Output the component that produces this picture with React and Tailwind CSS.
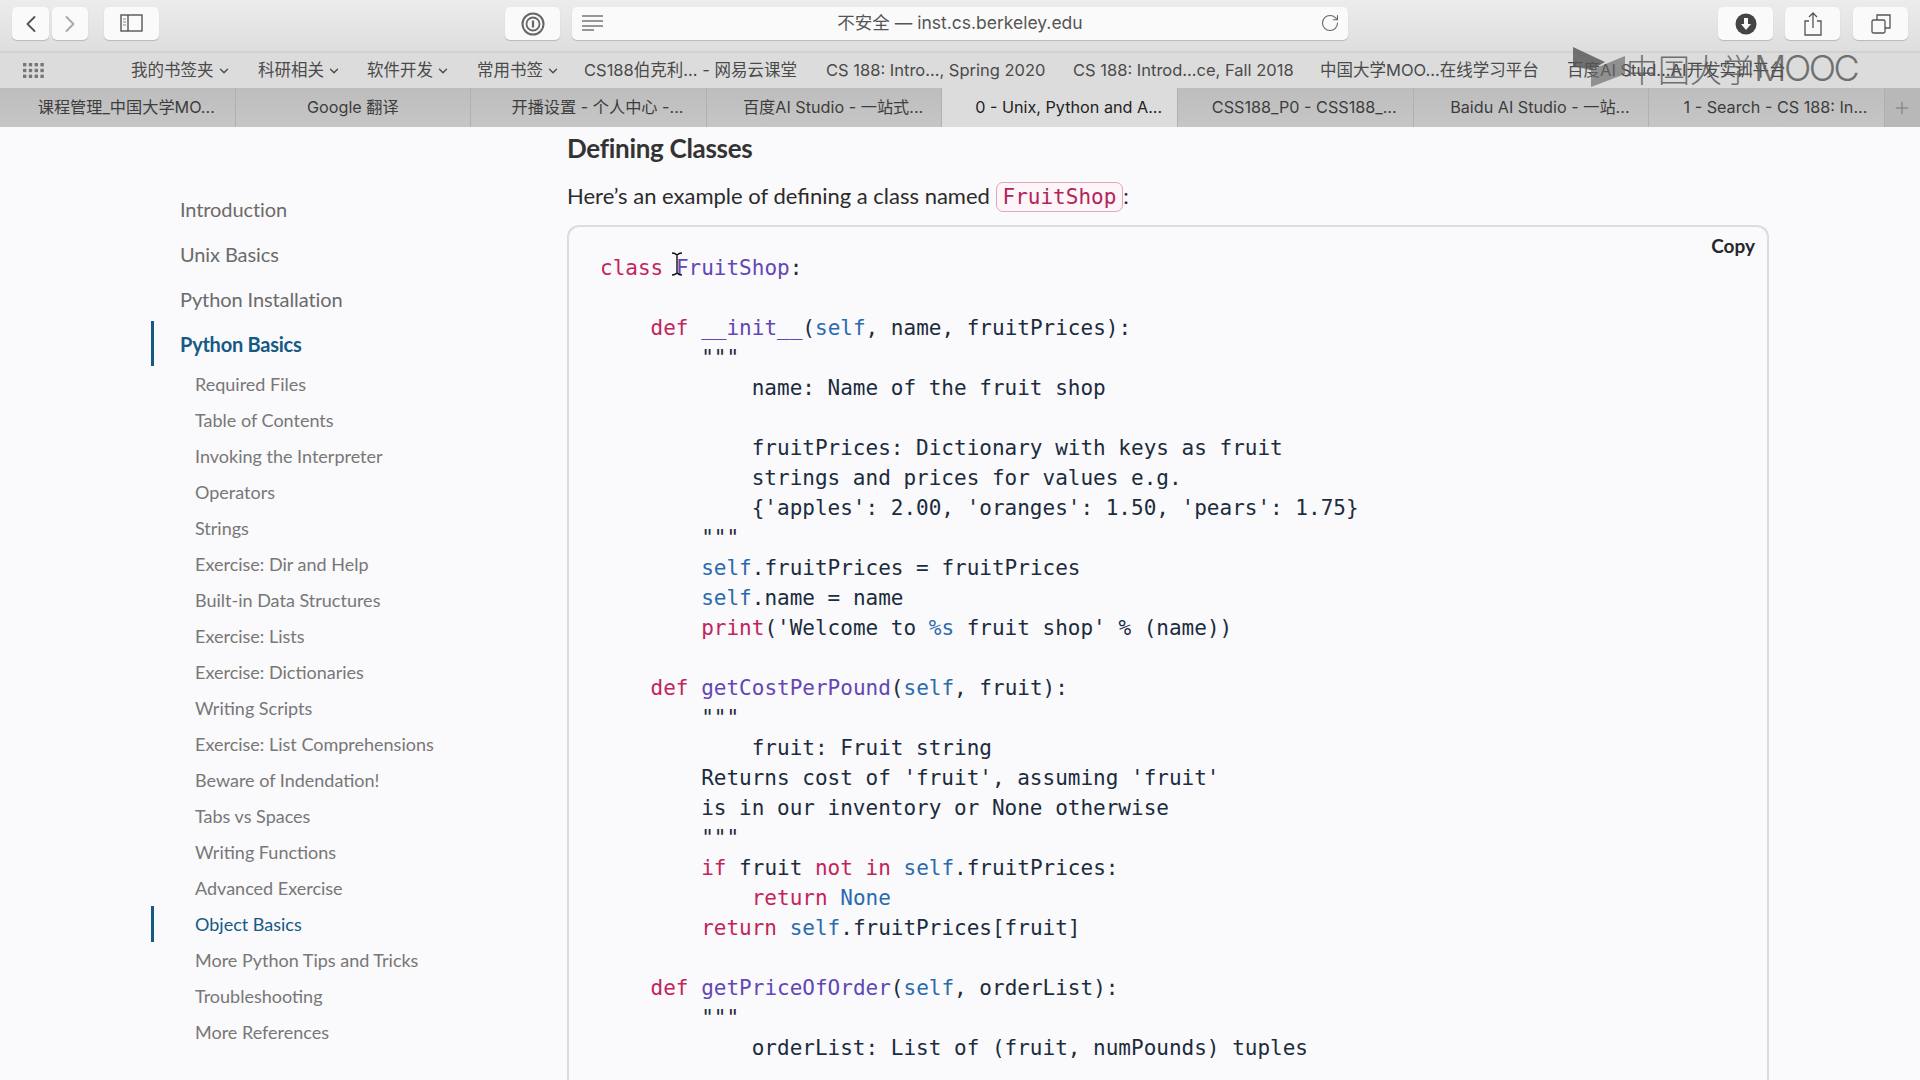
import { ChevronDown, ChevronLeft, ChevronRight, Plus, RotateCw } from "lucide-react";

const CJK = "font-['Inter','Noto_Sans_CJK_SC',sans-serif]";

const BOOKMARKS = [
  { label: "我的书签夹", menu: true, w: "w-[127px]" },
  { label: "科研相关", menu: true, w: "w-[109px]" },
  { label: "软件开发", menu: true, w: "w-[110px]" },
  { label: "常用书签", menu: true, w: "w-[107px]" },
  { label: "CS188伯克利... - 网易云课堂", w: "w-[242px]" },
  { label: "CS 188: Intro..., Spring 2020", w: "w-[247px]" },
  { label: "CS 188: Introd...ce, Fall 2018", w: "w-[247px]" },
  { label: "中国大学MOO...在线学习平台", w: "w-[247px]" },
  { label: "百度AI Stud...AI开发实训平台", w: "w-[230px]" },
];

const TABS = [
  "课程管理_中国大学MO...",
  "Google 翻译",
  "开播设置 - 个人中心 -...",
  "百度AI Studio - 一站式...",
  "0 - Unix, Python and A...",
  "CSS188_P0 - CSS188_...",
  "Baidu AI Studio - 一站...",
  "1 - Search - CS 188: In...",
];

const TOP_NAV = ["Introduction", "Unix Basics", "Python Installation"];

const SUB_NAV = [
  "Required Files",
  "Table of Contents",
  "Invoking the Interpreter",
  "Operators",
  "Strings",
  "Exercise: Dir and Help",
  "Built-in Data Structures",
  "Exercise: Lists",
  "Exercise: Dictionaries",
  "Writing Scripts",
  "Exercise: List Comprehensions",
  "Beware of Indendation!",
  "Tabs vs Spaces",
  "Writing Functions",
  "Advanced Exercise",
  "Object Basics",
  "More Python Tips and Tricks",
  "Troubleshooting",
  "More References",
];

const K = "text-[#c2255c]";
const T = "text-[#6247b5]";
const S = "text-[#2a6aae]";

const CODE = [
  [[K, "class"], ["", " "], [T, "FruitShop"], ["", ":"]],
  [],
  [["", "    "], [K, "def"], ["", " "], [T, "__init__"], ["", "("], [S, "self"], ["", ", name, fruitPrices):"]],
  [["", '        """']],
  [["", "            name: Name of the fruit shop"]],
  [],
  [["", "            fruitPrices: Dictionary with keys as fruit"]],
  [["", "            strings and prices for values e.g."]],
  [["", "            {'apples': 2.00, 'oranges': 1.50, 'pears': 1.75}"]],
  [["", '        """']],
  [["", "        "], [S, "self"], ["", ".fruitPrices = fruitPrices"]],
  [["", "        "], [S, "self"], ["", ".name = name"]],
  [["", "        "], [K, "print"], ["", "('Welcome to "], [S, "%s"], ["", " fruit shop' % (name))"]],
  [],
  [["", "    "], [K, "def"], ["", " "], [T, "getCostPerPound"], ["", "("], [S, "self"], ["", ", fruit):"]],
  [["", '        """']],
  [["", "            fruit: Fruit string"]],
  [["", "        Returns cost of 'fruit', assuming 'fruit'"]],
  [["", "        is in our inventory or None otherwise"]],
  [["", '        """']],
  [["", "        "], [K, "if"], ["", " fruit "], [K, "not in"], ["", " "], [S, "self"], ["", ".fruitPrices:"]],
  [["", "            "], [K, "return"], ["", " "], [S, "None"]],
  [["", "        "], [K, "return"], ["", " "], [S, "self"], ["", ".fruitPrices[fruit]"]],
  [],
  [["", "    "], [K, "def"], ["", " "], [T, "getPriceOfOrder"], ["", "("], [S, "self"], ["", ", orderList):"]],
  [["", '        """']],
  [["", "            orderList: List of (fruit, numPounds) tuples"]],
];

function ToolButton({ className = "", children }) {
  return (
    <div className={`h-[33px] flex items-center justify-center rounded-[5px] bg-[#fafafa] shadow-[0_1px_1px_rgba(0,0,0,0.18)] text-[#555] ${className}`}>
      {children}
    </div>
  );
}

function Toolbar() {
  return (
    <div className="h-[53px] shrink-0 flex items-start pt-[7px] pl-[12px] bg-gradient-to-b from-[#ececec] to-[#dedede] border-b-2 border-[#d2d2d2]">
      <ToolButton className="w-[37px]">
        <ChevronLeft size={28} strokeWidth={1.6} />
      </ToolButton>
      <ToolButton className="w-[36px] ml-[3px] text-[#a8a8a8]">
        <ChevronRight size={28} strokeWidth={1.6} />
      </ToolButton>
      <ToolButton className="w-[55px] ml-[16px]">
        <svg width="24" height="19" viewBox="0 0 24 19" fill="none" stroke="#555" strokeWidth="1.4">
          <rect x="1" y="1" width="21" height="16" />
          <path d="M8 1v16" />
          <path d="M3 5h3M3 8h3M3 11h3" strokeWidth="1.2" stroke="#888" />
        </svg>
      </ToolButton>
      <ToolButton className="w-[55px] ml-[346px]">
        <svg width="24" height="24" viewBox="0 0 24 24" fill="none" stroke="#666">
          <circle cx="12" cy="12" r="10.5" strokeWidth="2" />
          <circle cx="12" cy="12" r="6.5" strokeWidth="1.8" />
          <path d="M12 8.5v7" strokeWidth="2.2" />
        </svg>
      </ToolButton>
      <ToolButton className={`w-[776px] ml-[12px] relative text-[17.5px] text-[#4a4a4a] ${CJK}`}>
        <svg className="absolute left-[10px] top-[8px]" width="22" height="16" viewBox="0 0 22 16" stroke="#777" strokeWidth="1.3">
          <path d="M0 1h21M0 6h21M0 11h21M0 15h12" />
        </svg>
        <span>不安全 — inst.cs.berkeley.edu</span>
        <RotateCw className="absolute right-[8px] top-[6px] text-[#666]" size={20} strokeWidth={1.3} />
      </ToolButton>
      <ToolButton className="w-[55px] ml-[370px]">
        <svg width="22" height="22" viewBox="0 0 22 22">
          <circle cx="11" cy="11" r="10.5" fill="#444" />
          <path d="M9 5h4v6h3l-5 6-5-6h3z" fill="#fafafa" />
        </svg>
      </ToolButton>
      <ToolButton className="w-[55px] ml-[12px]">
        <svg width="20" height="24" viewBox="0 0 20 24" fill="none" stroke="#555" strokeWidth="1.3">
          <path d="M6 9H2v14h16V9h-4" />
          <path d="M10 16V1M6 5l4-4 4 4" />
        </svg>
      </ToolButton>
      <ToolButton className="w-[55px] ml-[13px]">
        <svg width="20" height="20" viewBox="0 0 20 20" fill="none" stroke="#555" strokeWidth="1.3">
          <rect x="1" y="6" width="13" height="13" rx="1.5" />
          <path d="M6 6V1h13v13h-5" />
        </svg>
      </ToolButton>
    </div>
  );
}

function BookmarkBar() {
  return (
    <div className={`h-[35px] shrink-0 flex items-center bg-[#dcdcdc] text-[16.5px] text-[#4a4a4a] ${CJK}`}>
      <div className="w-[131px] pl-[23px]">
        <svg width="22" height="16" viewBox="0 0 22 16" fill="#777">
          {[0, 1, 2].map((r) =>
            [0, 1, 2, 3].map((c) => <rect key={`${r}-${c}`} x={c * 5.8} y={r * 5.8} width="3.4" height="3.4" />)
          )}
        </svg>
      </div>
      {BOOKMARKS.map((b) => (
        <div key={b.label} className={`${b.w} shrink-0 flex items-center whitespace-nowrap`}>
          {b.label}
          {b.menu && <ChevronDown className="ml-[3px]" size={14} strokeWidth={2.4} />}
        </div>
      ))}
    </div>
  );
}

function TabBar() {
  return (
    <div className={`h-[39px] shrink-0 flex bg-gradient-to-b from-[#bdbdbd] to-[#c6c6c6] text-[16.2px] text-[#3d3d3d] ${CJK}`}>
      {TABS.map((tab, i) => (
        <div
          key={tab}
          className={`w-[235.6px] shrink-0 flex items-center justify-center whitespace-nowrap border-r border-[#b0b0b0] ${i === 1 ? "" : "pl-[18px]"} ${i === 4 ? "bg-[#dcdcdc] text-[#222]" : ""}`}
        >
          {tab}
        </div>
      ))}
      <div className="flex-1 flex items-center justify-center bg-[#b8b8b8] text-[#777]">
        <Plus size={20} strokeWidth={1.2} />
      </div>
    </div>
  );
}

function Sidebar() {
  return (
    <nav className="w-[567px] shrink-0 pt-[59px] pl-[151px] font-['Lato',sans-serif]">
      {TOP_NAV.map((item) => (
        <div key={item} className="h-[45px] pl-[29px] flex items-center text-[20px] tracking-[-0.1px] text-[#6b6b6b]">
          {item}
        </div>
      ))}
      <div className="h-[45px] pl-[26px] flex items-center text-[20px] tracking-[-0.25px] font-bold text-[#155a85] border-l-[3px] border-[#155a85]">
        Python Basics
      </div>
      {SUB_NAV.map((item) =>
        item === "Object Basics" ? (
          <div key={item} className="h-[36px] pl-[41px] flex items-center text-[18px] text-[#155a85] border-l-[3px] border-[#155a85]">
            {item}
          </div>
        ) : (
          <div key={item} className="h-[36px] pl-[44px] flex items-center text-[18px] text-[#777]">
            {item}
          </div>
        )
      )}
    </nav>
  );
}

function CodeBlock() {
  return (
    <div className="relative rounded-t-[12px] border-2 border-b-0 border-[#dcdcdf] pt-[26px] pb-[60px] pl-[31px] font-['DejaVu_Sans_Mono',monospace] text-[21px] leading-[30px] text-[#1b2c3e]">
      <span className="absolute right-[12px] top-[4px] font-['Lato',sans-serif] text-[19px] font-bold text-[#26262b]">Copy</span>
      {CODE.map((line, i) => (
        <div key={i} className="h-[30px] whitespace-pre">
          {line.map(([cls, text], j) => (
            <span key={j} className={cls}>
              {text}
            </span>
          ))}
        </div>
      ))}
    </div>
  );
}

export default function App() {
  return (
    <div className="relative h-screen overflow-hidden flex flex-col bg-[#faf9fb]">
      <Toolbar />
      <BookmarkBar />
      <TabBar />
      <div className="flex-1 min-h-0 flex overflow-hidden">
        <Sidebar />
        <main className="flex-1 pr-[151px] pt-[3px] font-['Lato',sans-serif]">
          <h2 className="h-[36px] leading-[36px] text-[26px] font-bold tracking-[-0.3px] text-[#333]">Defining Classes</h2>
          <p className="mt-[12px] h-[36px] leading-[36px] text-[22px] text-[#2b2b2b]">
            Here’s an example of defining a class named{" "}
            <code className="rounded-[7px] border border-[#e0a6bb] bg-[#fdf5f8] px-[6px] py-[2px] font-['DejaVu_Sans_Mono',monospace] text-[21px] text-[#b3245a]">FruitShop</code>:
          </p>
          <div className="mt-[11px]">
            <CodeBlock />
          </div>
        </main>
      </div>

      {/* MOOC watermark over the bookmark bar */}
      <div className="absolute left-[1573px] top-[47px] flex items-center opacity-80 text-[#555]">
        <svg width="54" height="42" viewBox="0 0 54 42">
          <path d="M0 0l32 15-14 8-18-4z" fill="#555" />
          <path d="M18 23l34-14v18L18 40z" fill="#666" opacity="0.8" />
        </svg>
        <span className="ml-[-1px] font-['Noto_Sans_CJK_SC',sans-serif] font-light text-[32px] leading-none whitespace-nowrap">中国大学</span>
        <span className="font-['Inter',sans-serif] font-light text-[36px] tracking-[-2.5px] leading-none">MOOC</span>
      </div>

      {/* text cursor */}
      <svg className="absolute left-[671px] top-[252px]" width="12" height="24" viewBox="0 0 12 24" fill="none" stroke="#111" strokeWidth="1.4">
        <path d="M1 1c3 0 4 1 5 2 1-1 2-2 5-2M6 3v18M1 23c3 0 4-1 5-2 1 1 2 2 5 2" />
      </svg>
    </div>
  );
}
